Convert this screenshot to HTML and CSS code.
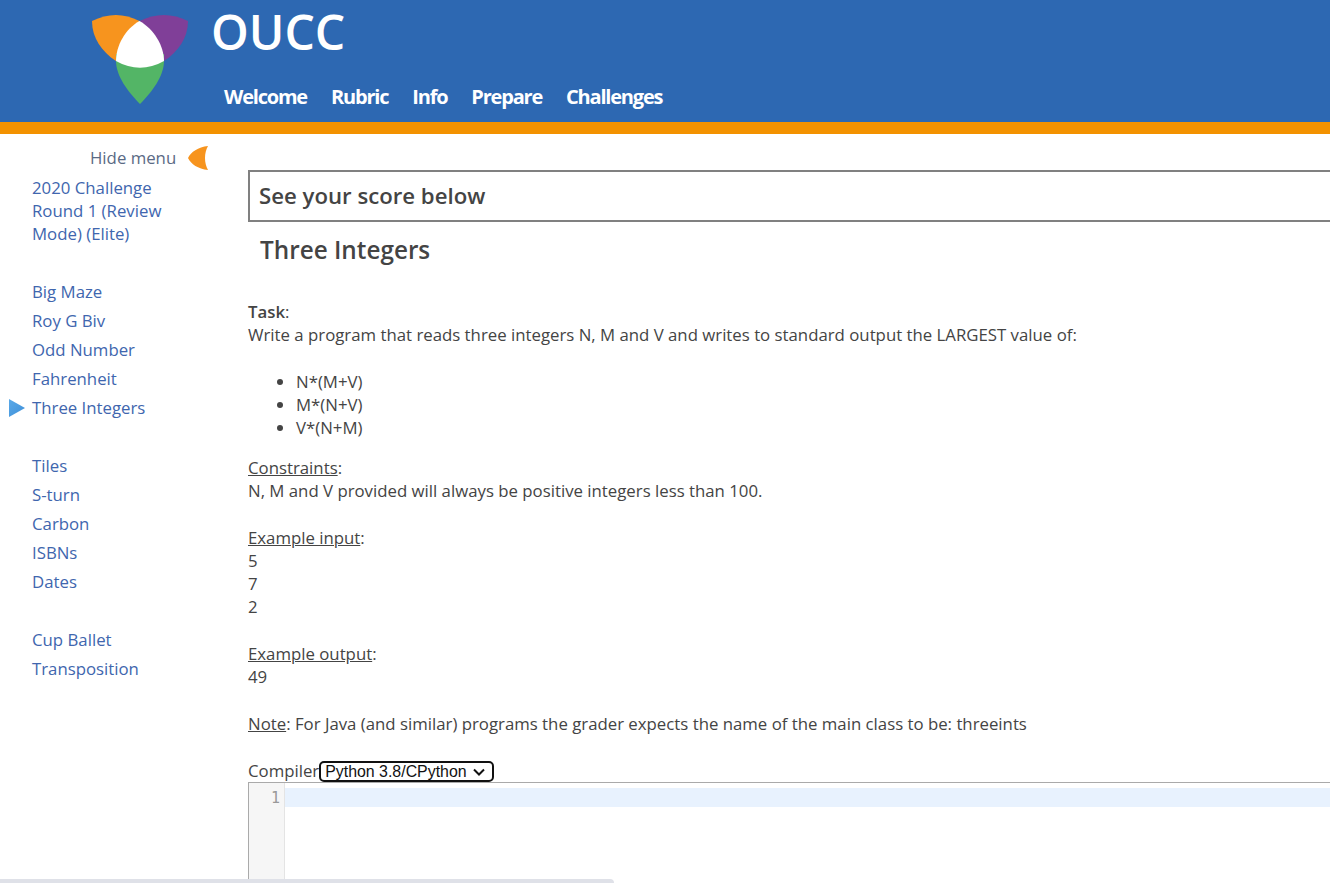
FILE: index.html
```html
<!DOCTYPE html>
<html lang="en">
<head>
<meta charset="utf-8">
<title>OUCC - Three Integers</title>
<link rel="stylesheet" href="styles.css">
</head>
<body>
<header class="site-header">
  <svg class="logo" width="96" height="90" viewBox="0 0 96 90">
    <path fill="#f7941e" d="M0 7 Q24 -5 47.5 7 L24 47 C10 38 0 24 0 7Z"/>
    <path fill="#803f98" d="M96 7 Q72 -5 47.5 7 L72 47 C86 38 96 24 96 7Z"/>
    <path fill="#53b566" d="M24 40 L72 40 L72 47 C72 62 60 78 48 90 C36 78 24 62 24 47Z"/>
    <path fill="#ffffff" d="M47.5 7 C62 15 72 32 72 47 C56 56 40 56 24 47 C24 32 33 15 47.5 7Z"/>
  </svg>
  <div class="header-text">
    <div class="brand">OUCC</div>
    <nav class="top-nav">
      <a>Welcome</a><a>Rubric</a><a>Info</a><a>Prepare</a><a>Challenges</a>
    </nav>
  </div>
</header>
<div class="page">
  <aside class="sidebar">
    <div class="hide-menu">
      <span class="hide-label">Hide menu</span>
      <svg width="20" height="24" viewBox="0 0 20 24"><path fill="#f7941e" d="M20 0 C10 1 3 6 0 12 C3 18 10 23 20 24 C16 17 16 7 20 0Z"/></svg>
    </div>
    <div class="round-title">2020 Challenge Round 1 (Review Mode) (Elite)</div>
    <ul class="menu-group">
      <li>Big Maze</li>
      <li>Roy G Biv</li>
      <li>Odd Number</li>
      <li>Fahrenheit</li>
      <li class="current"><svg class="arrow" width="16" height="18" viewBox="0 0 16 18"><defs><linearGradient id="arrowFill" x1="0" y1="0" x2="1" y2="1"><stop offset="0" stop-color="#5aa9e8"/><stop offset="1" stop-color="#3d8fd8"/></linearGradient></defs><path fill="url(#arrowFill)" d="M0 0 L16 9 L0 18 Z"/></svg>Three Integers</li>
    </ul>
    <ul class="menu-group">
      <li>Tiles</li>
      <li>S-turn</li>
      <li>Carbon</li>
      <li>ISBNs</li>
      <li>Dates</li>
    </ul>
    <ul class="menu-group">
      <li>Cup Ballet</li>
      <li>Transposition</li>
    </ul>
  </aside>
  <main class="content">
    <div class="score-box">See your score below</div>
    <h1 class="problem-title">Three Integers</h1>
    <div class="statement">
      <p><b class="strong">Task</b>:<br>Write a program that reads three integers N, M and V and writes to standard output the LARGEST value of:</p>
      <ul class="formulae">
        <li>N*(M+V)</li>
        <li>M*(N+V)</li>
        <li>V*(N+M)</li>
      </ul>
      <p><u>Constraints</u>:<br>N, M and V provided will always be positive integers less than 100.</p>
      <p><u>Example input</u>:<br>5<br>7<br>2</p>
      <p><u>Example output</u>:<br>49</p>
      <p><u>Note</u>: For Java (and similar) programs the grader expects the name of the main class to be: threeints</p>
    </div>
    <div class="compiler-row">
      <span>Compiler</span>
      <span class="select-box">Python 3.8/CPython<svg width="12" height="8" viewBox="0 0 12 8"><path d="M1 1.5 L6 6.5 L11 1.5" fill="none" stroke="#111" stroke-width="2"/></svg></span>
    </div>
    <div class="editor">
      <div class="gutter">1</div>
      <div class="code"><div class="active-line"></div></div>
    </div>
  </main>
</div>
<div class="scrollbar-thumb"></div>
</body>
</html>
```

FILE: styles.css
```css
html, body {
  margin: 0;
  height: 883px;
  overflow: hidden;
  background: #fff;
}
body {
  font-family: "Open Sans", sans-serif;
  font-size: 16.8px;
  line-height: 23px;
  color: #444;
  position: relative;
}
.site-header {
  height: 122px;
  background: #2d68b2;
  border-bottom: 12px solid #f39200;
  display: flex;
  padding-left: 92px;
}
.logo {
  margin-top: 14px;
  flex: none;
}
.header-text {
  margin-left: 23px;
}
.brand {
  font-size: 48px;
  line-height: 64px;
  color: #fff;
  font-weight: 600;
}
.top-nav {
  display: flex;
  gap: 24px;
  margin-top: 19px;
  margin-left: 13px;
  font-size: 20px;
  line-height: 27px;
  font-weight: 700;
  color: #fff;
  letter-spacing: -1.2px;
}
.page {
  display: flex;
}
.sidebar {
  width: 248px;
  flex: none;
  box-sizing: border-box;
  padding-left: 32px;
  color: #4066ae;
}
.hide-menu {
  display: flex;
  align-items: center;
  margin: 12px 0 0 58px;
  height: 24px;
  gap: 12px;
  color: #5a6a85;
}
.hide-label {
  margin-bottom: 2px;
}
.round-title {
  width: 136px;
  margin-top: 6px;
  padding-bottom: 3px;
}
.menu-group {
  list-style: none;
  margin: 29px 0;
  padding: 0;
  line-height: 29px;
}
.menu-group li {
  position: relative;
}
.arrow {
  position: absolute;
  left: -23px;
  top: 6px;
}
.content {
  flex: 1;
  min-width: 0;
}
.score-box {
  margin-top: 36px;
  height: 52px;
  border: 2px solid #808080;
  border-right: 0;
  box-sizing: border-box;
  padding-left: 9px;
  font-size: 22.2px;
  line-height: 47px;
  font-weight: 600;
  color: #444;
}
.problem-title {
  margin: 8px 0 0 12px;
  font-size: 24.3px;
  line-height: 40px;
  font-weight: 600;
  color: #444;
}
.statement {
  margin-top: 30px;
}
.statement p {
  margin: 0 0 24px;
}
.strong {
  font-weight: 600;
}
.formulae {
  margin: 0 0 17px;
  padding-left: 48px;
}
.compiler-row {
  height: 23px;
  display: flex;
  align-items: center;
  white-space: nowrap;
}
.select-box {
  display: flex;
  align-items: center;
  height: 21px;
  margin-top: 2px;
  box-sizing: border-box;
  border: 2px solid #111;
  border-radius: 5px;
  padding: 0 7px 0 4px;
  gap: 6px;
  font-family: "Liberation Sans", sans-serif;
  font-size: 15.9px;
  color: #111;
}
.editor {
  display: flex;
  height: 200px;
  border: 1px solid #aaa;
  border-right: 0;
}
.gutter {
  width: 36px;
  box-sizing: border-box;
  background: #f6f6f6;
  border-right: 1px solid #e4e4e4;
  text-align: right;
  padding: 6px 4px 0 0;
  font-family: "DejaVu Sans Mono", monospace;
  font-size: 15px;
  line-height: 19px;
  color: #999;
}
.code {
  flex: 1;
  padding-top: 5px;
}
.active-line {
  height: 19px;
  background: #e8f2fe;
}
.scrollbar-thumb {
  position: absolute;
  left: 0;
  bottom: 0;
  width: 614px;
  height: 4px;
  background: #dfe1e8;
  border-radius: 0 4px 0 0;
}
```
